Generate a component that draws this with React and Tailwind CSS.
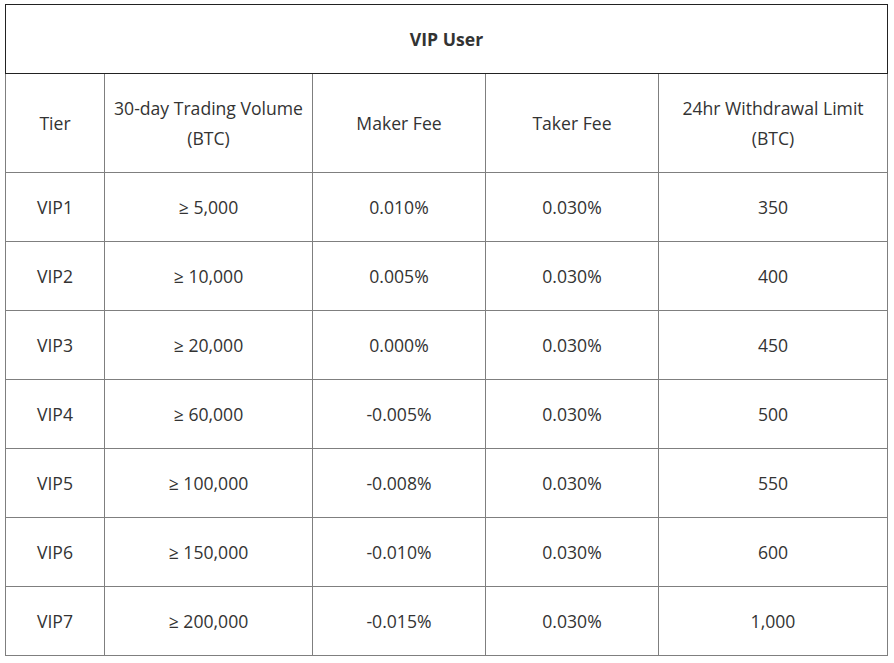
import React from "react";

const rows = [
  ["VIP1", "≥ 5,000", "0.010%", "0.030%", "350"],
  ["VIP2", "≥ 10,000", "0.005%", "0.030%", "400"],
  ["VIP3", "≥ 20,000", "0.000%", "0.030%", "450"],
  ["VIP4", "≥ 60,000", "-0.005%", "0.030%", "500"],
  ["VIP5", "≥ 100,000", "-0.008%", "0.030%", "550"],
  ["VIP6", "≥ 150,000", "-0.010%", "0.030%", "600"],
  ["VIP7", "≥ 200,000", "-0.015%", "0.030%", "1,000"],
];

export default function App() {
  const td = "border border-[#7f7f7f] text-center align-middle p-0";
  return (
    <div className="bg-white w-[894px] h-[663px] pt-[4px] pl-[5px] text-[#333] text-[17.6px] leading-[30px]" style={{ fontFamily: '"Open Sans", "Noto Sans", sans-serif' }}>
      <table className="table-fixed border-collapse border border-[#222] w-[882px]">
        <colgroup>
          <col className="w-[99px]" />
          <col className="w-[208px]" />
          <col className="w-[173px]" />
          <col className="w-[173px]" />
          <col className="w-[229px]" />
        </colgroup>
        <tbody>
          <tr className="h-[69px]">
            <td colSpan={5} className="border border-[#222] text-center align-middle font-bold p-0">VIP User</td>
          </tr>
          <tr className="h-[99px]">
            <td className={td}>Tier</td>
            <td className={td}>30-day Trading Volume<br />(BTC)</td>
            <td className={td}>Maker Fee</td>
            <td className={td}>Taker Fee</td>
            <td className={td}>24hr Withdrawal Limit<br />(BTC)</td>
          </tr>
          {rows.map((r) => (
            <tr key={r[0]} className="h-[69px]">
              {r.map((c, i) => (
                <td key={i} className={td}>{c}</td>
              ))}
            </tr>
          ))}
        </tbody>
      </table>
    </div>
  );
}
